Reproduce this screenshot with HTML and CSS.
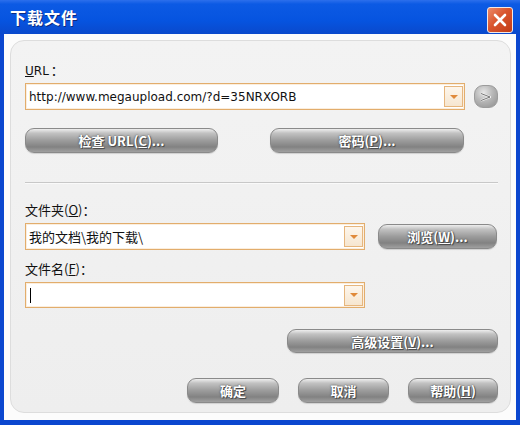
FILE: index.html
```html
<!DOCTYPE html>
<html lang="zh-CN">
    <head>
        <title>下载文件</title>
        <meta charset="utf-8">
        <meta name="viewport" content="width=device-width, initial-scale=1">
        <link rel="stylesheet" href="styles.css">
    </head>
    <body>
        <div class="window">
            <!-- title bar -->
            <div class="titlebar">
                <span class="title">下载文件</span>
                <span class="close">
                    <svg width="14" height="14" viewBox="0 0 14 14">
                        <path d="M2 2 L12 12 M12 2 L2 12" stroke="#fff" stroke-width="2.6" stroke-linecap="round"/>
                    </svg>
                </span>
            </div>
            <div class="client">
                <div class="panel">
                    <div class="label label-url"><u>U</u>RL<span class="colon">：</span></div>
                    <div class="row">
                        <div class="combo combo-url">
                            <span class="combo-text">http://www.megaupload.com/?d=35NRXORB</span>
                            <span class="drop"><i class="arrow"></i></span>
                        </div>
                        <span class="go">
                            <svg width="14" height="10" viewBox="0 0 14 10">
                                <path d="M2 1.5 L11 5 L2 8.5" fill="none" stroke="#f4f4f4" stroke-width="2.2" stroke-linejoin="round"/>
                                <path d="M2 1.5 L11 5 L2 8.5" fill="none" stroke="#555" stroke-width="0.8" stroke-linejoin="round"/>
                            </svg>
                        </span>
                    </div>
                    <div class="row row-check">
                        <button class="btn btn-check">检查 URL(<u>C</u>)...</button>
                        <button class="btn btn-pass">密码(<u>P</u>)...</button>
                    </div>
                    <div class="sep"></div>
                    <div class="label label-folder">文件夹(<u>O</u>)：</div>
                    <div class="row">
                        <div class="combo combo-short">
                            <span class="combo-text">我的文档\我的下载\</span>
                            <span class="drop"><i class="arrow"></i></span>
                        </div>
                        <button class="btn btn-browse">浏览(<u>W</u>)...</button>
                    </div>
                    <div class="label label-file">文件名(<u>F</u>)：</div>
                    <div class="combo combo-short combo-file">
                        <span class="caret"></span>
                        <span class="drop"><i class="arrow"></i></span>
                    </div>
                    <div class="row row-right row-adv">
                        <button class="btn btn-adv">高级设置(<u>V</u>)...</button>
                    </div>
                    <div class="row row-right row-bottom">
                        <button class="btn btn-ok">确定</button>
                        <button class="btn btn-cancel">取消</button>
                        <button class="btn btn-help">帮助(<u>H</u>)</button>
                    </div>
                </div>
            </div>
        </div>
    </body>
</html>
```

FILE: styles.css
```css
html, body {
    margin: 0;
    padding: 0;
    background-color: #0b47cf;
}

.window {
    width: 520px;
    height: 425px;
    display: flex;
    flex-direction: column;
    background-color: #0b47cf;
    font-family: "Noto Sans CJK SC", "DejaVu Sans", sans-serif;
}

/* title bar */
.titlebar {
    height: 34px;
    flex: none;
    display: flex;
    align-items: center;
    padding: 0 7px 0 10px;
    background: linear-gradient(#2c6fec 0%, #0c5ae4 12%, #0654e0 60%, #0a49cc 100%);
}

.title {
    color: #fff;
    font-size: 16px;
    font-weight: bold;
    letter-spacing: 1px;
    text-shadow: 1px 1px 0 #0a2a80;
}

.close {
    margin-left: auto;
    width: 24px;
    height: 24px;
    margin-top: 6px;
    display: flex;
    align-items: center;
    justify-content: center;
    border: 1px solid #f4e8e4;
    border-radius: 3px;
    background: linear-gradient(135deg, #ec8a6a 0%, #d9552e 45%, #c23c16 100%);
}

/* client area */
.client {
    flex: 1;
    margin: 0 4px 5px 4px;
    padding: 6px 6px 7px 6px;
    background-color: #fcfcfc;
    display: flex;
}

.panel {
    flex: 1;
    border: 1px solid #dddddd;
    border-radius: 14px;
    background: linear-gradient(#f3f3f3, #eeeeee);
    padding: 21px 12px 0 14px;
    display: flex;
    flex-direction: column;
}

.label {
    height: 16px;
    line-height: 16px;
    font-size: 13px;
    color: #111;
}

.label-url {
    font-family: "DejaVu Sans", sans-serif;
    font-size: 12px;
}

.colon {
    font-family: "Noto Sans CJK SC", sans-serif;
    font-size: 13px;
    margin-left: 2px;
}

.label-folder {
    margin-top: 18px;
}

.label-file {
    margin-top: 11px;
}

.row {
    display: flex;
    align-items: center;
}

.row-right {
    justify-content: flex-end;
}

/* combo boxes */
.combo {
    height: 25px;
    border: 1px solid #e2ad6c;
    background-color: #fff;
    display: flex;
    align-items: center;
    padding: 0 1px 0 3px;
    box-shadow: inset 0 0 0 1px #fbeede;
    margin-top: 5px;
}

.combo-url {
    width: 434px;
}

.combo-short {
    width: 334px;
}

.combo-file {
    height: 24px;
}

.combo-text {
    flex: 1;
    font-size: 13px;
    color: #111;
    white-space: nowrap;
}

.combo-url .combo-text {
    font-family: "DejaVu Sans", sans-serif;
    font-size: 12px;
}

.caret {
    width: 1px;
    height: 15px;
    background-color: #000;
    margin-left: 1px;
}

.drop {
    margin-left: auto;
    width: 17px;
    height: 19px;
    border: 1px solid #e6b67e;
    background: linear-gradient(#fdf6ec, #f6e6d0);
    display: flex;
    align-items: center;
    justify-content: center;
}

.arrow {
    width: 0;
    height: 0;
    border-left: 4px solid transparent;
    border-right: 4px solid transparent;
    border-top: 4px solid #e08a3a;
}

.go {
    width: 22px;
    height: 21px;
    margin: 5px 0 0 9px;
    border-radius: 9px;
    border: 1px solid #9c9c9c;
    background: radial-gradient(circle at 40% 30%, #e6e6e6 0%, #b8b8b8 45%, #8e8e8e 100%);
    display: flex;
    align-items: center;
    justify-content: center;
}

/* gray pill buttons */
.btn {
    height: 25px;
    padding: 0;
    border: 1px solid #8a8a8a;
    border-radius: 9px;
    background: linear-gradient(#eeeeee 0%, #c2c2c2 18%, #9c9c9c 50%, #828282 78%, #a0a0a0 100%);
    box-shadow: 0 1px 1px #cfcfcf;
    color: #fff;
    font-family: "Noto Sans CJK SC", "DejaVu Sans", sans-serif;
    font-size: 13px;
    font-weight: bold;
    line-height: 23px;
    text-shadow: 0 0 2px #333, 1px 1px 0 #555;
}

.row-check {
    margin-top: 18px;
    gap: 52px;
}

.btn-check {
    width: 193px;
}

.btn-pass {
    width: 194px;
}

.btn-browse {
    width: 119px;
    margin: 5px 0 0 13px;
}

.sep {
    height: 0;
    border-top: 1px solid #c8c8c8;
    border-bottom: 1px solid #fafafa;
    margin-top: 29px;
}

.row-adv {
    margin-top: 21px;
}

.btn-adv {
    width: 211px;
    height: 24px;
}

.row-bottom {
    margin-top: 25px;
    gap: 19px;
}

.btn-ok {
    width: 92px;
}

.btn-cancel {
    width: 91px;
}

.btn-help {
    width: 90px;
}
```
